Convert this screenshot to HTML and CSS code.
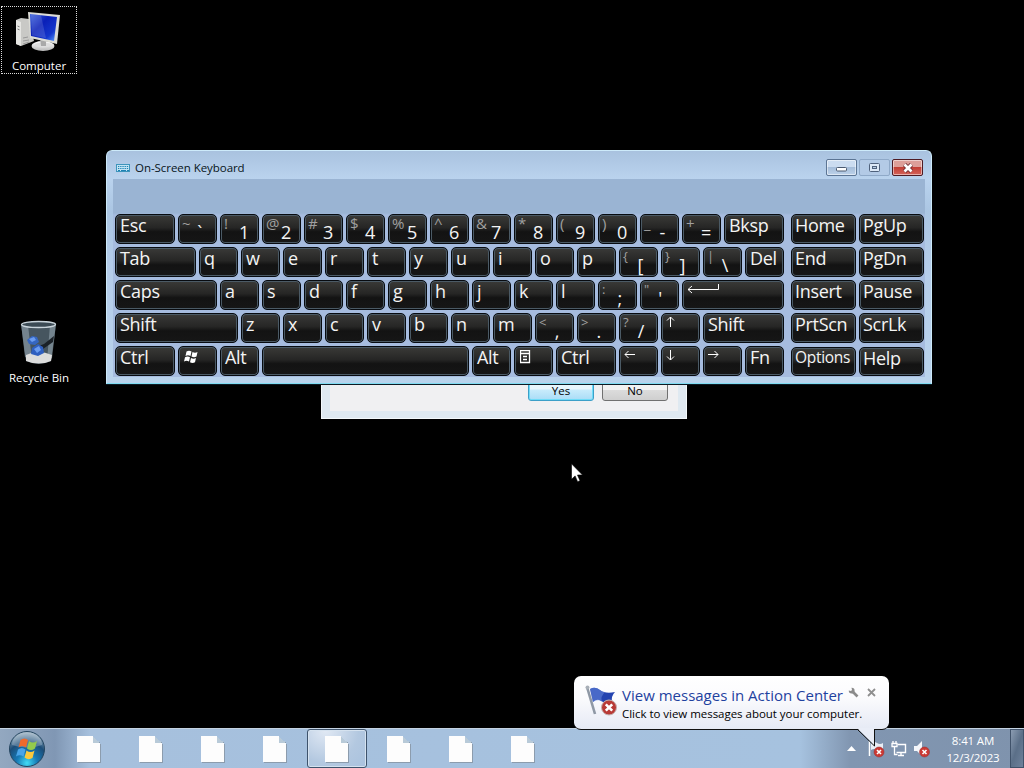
FILE: index.html
```html
<!DOCTYPE html>
<html lang="en">
<head>
    <meta charset="UTF-8">
    <meta name="viewport" content="width=device-width, initial-scale=1.0">
    <title>Desktop</title>
    <link rel="stylesheet" href="styles.css">
</head>
<body>
    <div class="desktop">
        <div class="icon computer">
            <svg width="48" height="46" viewBox="0 0 48 46">
                <defs>
                    <linearGradient id="screen" x1="0" y1="0" x2="1" y2="1">
                        <stop offset="0" stop-color="#3c62dc"/>
                        <stop offset=".4" stop-color="#0a20b8"/>
                        <stop offset=".75" stop-color="#1436cc"/>
                        <stop offset="1" stop-color="#5ea4ff"/>
                    </linearGradient>
                    <linearGradient id="metal" x1="0" y1="0" x2="0" y2="1">
                        <stop offset="0" stop-color="#fff"/>
                        <stop offset="1" stop-color="#b9b9b9"/>
                    </linearGradient>
                </defs>
                <path d="M1 9l5-2 8 1 5 22-13 5-5-2z" fill="#c9c9c6"/>
                <path d="M1 9l5 2v24l-5-2z" fill="#e6e6e3"/>
                <path d="M2.500 15l2 .8M2.500 18l2 .8" stroke="#777"/>
                <path d="M8 27l5-1M8 30l6-1M8 33l6-2" stroke="#999"/>
                <ellipse cx="28" cy="35" rx="11.500" ry="5" fill="url(#metal)"/>
                <ellipse cx="28" cy="34" rx="8" ry="2.500" fill="#dedede"/>
                <path d="M25 27l6 2v6h-5z" fill="#a9a9a9"/>
                <path d="M13 1l32 3-3 29-27-6z" fill="#dcdcd6"/>
                <path d="M15 3l27 3-3 24-23-5z" fill="url(#screen)"/>
                <path d="M16 3.200l10 1 5 23-14-3z" fill="#fff" opacity=".14"/>
            </svg>
            <span>Computer</span>
        </div>

        <div class="icon recycle">
            <svg width="40" height="46" viewBox="0 0 40 46">
                <path d="M2 4l5 37q13 6 25 0l5-37z" fill="#46555f"/>
                <path d="M2 4l4 33 7 3L9 5z" fill="#8797a3" opacity=".7"/>
                <path d="M37 4l-4 34-5 3 3-36z" fill="#93a3ad" opacity=".6"/>
                <path d="M7 35q12-6 26 0l-1 6q-12 5-25 0z" fill="#dcdcdc"/>
                <path d="M17 27l8-3 10-8-1 6-10 7-6 1z" fill="#1b2127"/>
                <path d="M8 20l5-4 5 1 2 5-4 3-6-1z" fill="#3566c0"/>
                <path d="M13 28l6-4 5 3 1 6-6 3-7-2z" fill="#2f5fc0"/>
                <path d="M10 19l5-2 2 3-4 2zM15 29l5-3 2 4-4 3z" fill="#6b9cf0"/>
                <ellipse cx="19.500" cy="4.500" rx="17" ry="3" fill="#3b4a54" stroke="#c8d3da" stroke-width="1.300"/>
            </svg>
            <span>Recycle Bin</span>
        </div>

        <div class="dialog">
            <div class="dialog-body">
                <button class="btn default">Yes</button>
                <button class="btn">No</button>
            </div>
        </div>

        <div class="window">
            <div class="titlebar">
                <svg class="kb-icon" width="15" height="9" viewBox="0 0 15 9">
                    <rect x=".5" y=".5" width="13" height="7" fill="#c3e4f4" stroke="#3d94bb"/>
                    <path d="M2 2.500h11M2 4.500h11" stroke="#1c82b4" stroke-dasharray="1.300 .9"/>
                    <path d="M2 6.500h2M5 6.500h5M11 6.500h2" stroke="#1c82b4"/>
                </svg>
                <span class="title">On-Screen Keyboard</span>
                <div class="controls">
                    <div class="ctl">
                        <svg class="dash" width="12" height="6" viewBox="0 0 12 6"><rect x=".5" y="1.500" width="10" height="3.500" rx="1" fill="#fff" stroke="#4b5a70"/></svg>
                    </div>
                    <div class="ctl max">
                        <svg width="11" height="9" viewBox="0 0 11 9"><rect x=".5" y=".5" width="10" height="8" rx="1" fill="#dce8f6" stroke="#4f617c"/><rect x="3.500" y="3.500" width="4" height="2" fill="#b9cde4" stroke="#4f617c"/></svg>
                    </div>
                    <div class="ctl close">
                        <svg width="12" height="10" viewBox="0 0 12 10"><path d="M2.500 1.500l7 7M9.500 1.500l-7 7" stroke="#6b2a2e" stroke-width="4.400"/><path d="M2.500 1.500l7 7M9.500 1.500l-7 7" stroke="#fff" stroke-width="2.800"/></svg>
                    </div>
                </div>
            </div>

            <div class="keyboard">
                <div class="main-keys">
                    <div class="row">
                        <div class="key u3">Esc</div>
                        <div class="key dual tick"><i>~</i><b>`</b></div>
                        <div class="key dual"><i>!</i><b>1</b></div>
                        <div class="key dual"><i>@</i><b>2</b></div>
                        <div class="key dual"><i>#</i><b>3</b></div>
                        <div class="key dual"><i>$</i><b>4</b></div>
                        <div class="key dual"><i>%</i><b>5</b></div>
                        <div class="key dual"><i>^</i><b>6</b></div>
                        <div class="key dual"><i>&amp;</i><b>7</b></div>
                        <div class="key dual"><i>*</i><b>8</b></div>
                        <div class="key dual"><i>(</i><b>9</b></div>
                        <div class="key dual"><i>)</i><b>0</b></div>
                        <div class="key dual minus"><i>_</i><b>-</b></div>
                        <div class="key dual"><i>+</i><b>=</b></div>
                        <div class="key u3">Bksp</div>
                    </div>
                    <div class="row">
                        <div class="key u4">Tab</div>
                        <div class="key">q</div>
                        <div class="key">w</div>
                        <div class="key">e</div>
                        <div class="key">r</div>
                        <div class="key">t</div>
                        <div class="key">y</div>
                        <div class="key">u</div>
                        <div class="key">i</div>
                        <div class="key">o</div>
                        <div class="key">p</div>
                        <div class="key dual low"><i>{</i><b>[</b></div>
                        <div class="key dual low"><i>}</i><b>]</b></div>
                        <div class="key dual low slash"><i>|</i><b>\</b></div>
                        <div class="key">Del</div>
                    </div>
                    <div class="row">
                        <div class="key u5">Caps</div>
                        <div class="key">a</div>
                        <div class="key">s</div>
                        <div class="key">d</div>
                        <div class="key">f</div>
                        <div class="key">g</div>
                        <div class="key">h</div>
                        <div class="key">j</div>
                        <div class="key">k</div>
                        <div class="key">l</div>
                        <div class="key dual low"><i>:</i><b>;</b></div>
                        <div class="key dual low quote"><i>"</i><b>'</b></div>
                        <div class="key u5">
                            <svg width="34" height="12" viewBox="0 0 34 12"><path d="M31.500 1v5.500H1M5 3L1 6.500 5 10" fill="none" stroke="#fff"/></svg>
                        </div>
                    </div>
                    <div class="row">
                        <div class="key u6">Shift</div>
                        <div class="key">z</div>
                        <div class="key">x</div>
                        <div class="key">c</div>
                        <div class="key">v</div>
                        <div class="key">b</div>
                        <div class="key">n</div>
                        <div class="key">m</div>
                        <div class="key dual low"><i>&lt;</i><b>,</b></div>
                        <div class="key dual low"><i>&gt;</i><b>.</b></div>
                        <div class="key dual low slash"><i>?</i><b>/</b></div>
                        <div class="key">
                            <svg width="12" height="12" viewBox="0 0 12 12"><path d="M4.500 11V1M1 4.500L4.500 1 8 4.500" fill="none" stroke="#fff"/></svg>
                        </div>
                        <div class="key u4">Shift</div>
                    </div>
                    <div class="row">
                        <div class="key u3">Ctrl</div>
                        <div class="key">
                            <svg class="win" width="16" height="14" viewBox="0 0 16 14">
                                <path d="M3.500 1.500q2.500-1.500 5 0l-1 4.500q-2.500-1.500-5 0zM9.500 2q2.500 1.300 5 0l-1 4.500q-2.500 1.300-5 0zM2 7.200q2.500-1.500 5 0l-1 4.300q-2.500-1.500-5 0zM8 8q2.500 1.300 5 0l-1 4.300q-2.500 1.300-5 0z" fill="#fff"/>
                            </svg>
                        </div>
                        <div class="key">Alt</div>
                        <div class="key u10"></div>
                        <div class="key">Alt</div>
                        <div class="key">
                            <svg class="menu" width="11" height="14" viewBox="0 0 11 14"><path d="M.5.5h9v12h-9zM0 3.500h10M3 6.500h4M3 9.500h4" fill="none" stroke="#fff" stroke-width="1.300"/></svg>
                        </div>
                        <div class="key u3">Ctrl</div>
                        <div class="key">
                            <svg width="12" height="12" viewBox="0 0 12 12"><path d="M11 5.500H1M4.500 2L1 5.500 4.500 9" fill="none" stroke="#fff"/></svg>
                        </div>
                        <div class="key">
                            <svg width="12" height="12" viewBox="0 0 12 12"><path d="M4.500 1v10M1 7.500L4.500 11 8 7.500" fill="none" stroke="#fff"/></svg>
                        </div>
                        <div class="key">
                            <svg width="12" height="12" viewBox="0 0 12 12"><path d="M0 5.500h10M6.500 2L10 5.500 6.500 9" fill="none" stroke="#fff"/></svg>
                        </div>
                        <div class="key">Fn</div>
                    </div>
                </div>

                <div class="side-keys">
                    <div class="key">Home</div>
                    <div class="key">PgUp</div>
                    <div class="key">End</div>
                    <div class="key">PgDn</div>
                    <div class="key">Insert</div>
                    <div class="key">Pause</div>
                    <div class="key">PrtScn</div>
                    <div class="key">ScrLk</div>
                    <div class="key short small">Options</div>
                    <div class="key short">Help</div>
                </div>
            </div>
        </div>

        <svg class="cursor" width="12" height="20" viewBox="0 0 12 20">
            <path d="M.5.800v15.500l3.600-3.400 2.500 5.800 2.400-1-2.500-5.700h5z" fill="#fff" stroke="#000" stroke-width=".6"/>
        </svg>

        <div class="taskbar">
            <div class="start">
                <svg width="38" height="38" viewBox="0 0 38 38">
                    <defs>
                        <radialGradient id="orb" cx=".5" cy=".9" r=".85">
                            <stop offset="0" stop-color="#42dcf5"/>
                            <stop offset=".35" stop-color="#1779b5"/>
                            <stop offset=".7" stop-color="#1c4d78"/>
                            <stop offset="1" stop-color="#8ca6ba"/>
                        </radialGradient>
                    </defs>
                    <circle cx="19" cy="19" r="17.500" fill="url(#orb)" stroke="#24455f"/>
                    <path d="M4 15a15 13 0 0 1 30 0q-14 5-30 0z" fill="#fff" opacity=".25"/>
                    <path d="M12.500 10q4-3 7.500 0l-2 7.500q-4-3-7.500 0z" fill="#ee6a2c"/>
                    <path d="M21 11q4 3 8 0l-2 7.500q-4 3-8 0z" fill="#93ca4c"/>
                    <path d="M10 19.500q4-3 7.500 0l-2 7q-4-2.500-7.500 0z" fill="#49a4e8"/>
                    <path d="M18.500 20.500q4 3 8 0l-2 7.500q-4 2.500-8-.5z" fill="#fbc93d"/>
                </svg>
            </div>
            <div class="tasks">
                <div class="task"><div class="file"></div></div>
                <div class="task"><div class="file"></div></div>
                <div class="task"><div class="file"></div></div>
                <div class="task"><div class="file"></div></div>
                <div class="task active"><div class="file"></div></div>
                <div class="task"><div class="file"></div></div>
                <div class="task"><div class="file"></div></div>
                <div class="task"><div class="file"></div></div>
            </div>
            <div class="tray">
                <svg class="arrow" width="9" height="5" viewBox="0 0 9 5"><path d="M4.500 0L9 5H0z" fill="#fff"/></svg>
                <svg width="18" height="18" viewBox="0 0 18 18">
                    <path d="M2.500 1v15" stroke="#fff" stroke-width="1.500"/>
                    <path d="M4 3q3-2 6 0t6 0v7q-3 2-6 0t-6 0z" fill="#e8edf5"/>
                    <circle cx="12" cy="12" r="5" fill="#cb3a34" stroke="#9b2c2c" stroke-width=".5"/>
                    <path d="M10 10l4 4M14 10l-4 4" stroke="#fff" stroke-width="1.600"/>
                </svg>
                <svg width="16" height="16" viewBox="0 0 16 16">
                    <path d="M6.500 3.500h8v8h-9M7 14.500h6M10 12v2" fill="none" stroke="#fff" stroke-width="1.400"/>
                    <path d="M1 2.500h5v3H1zM2 0v2M5 0v2M3.500 5.500v8h3" fill="none" stroke="#fff" stroke-width="1.300"/>
                </svg>
                <svg width="18" height="18" viewBox="0 0 18 18">
                    <path d="M1 6h3l5-5v15l-5-5H1z" fill="#f4f6fa"/>
                    <circle cx="11.500" cy="12" r="5" fill="#cb3a34" stroke="#9b2c2c" stroke-width=".5"/>
                    <path d="M9.500 10l4 4M13.500 10l-4 4" stroke="#fff" stroke-width="1.600"/>
                </svg>
                <div class="clock">
                    <span>8:41 AM</span>
                    <span>12/3/2023</span>
                </div>
                <div class="show-desktop"></div>
            </div>
        </div>

        <div class="balloon">
            <svg class="flag" width="34" height="32" viewBox="0 0 34 32">
                <path d="M2 2l8 27" stroke="#8f98a5" stroke-width="2.600"/>
                <circle cx="2.500" cy="2.500" r="2" fill="#a9b0b8"/>
                <path d="M5 4q5-3 10 1t15 2q-4 4-3 10-7 2-11-1t-8 1z" fill="#2343b0"/>
                <path d="M5 4q5-3 10 1 2 2 5 2-5 5-3 9-5-2-9 1z" fill="#6e8fe0" opacity=".5"/>
                <circle cx="24" cy="22.500" r="7.500" fill="#b83a36" stroke="#c5b3b3"/>
                <path d="M20.800 19.300l6.400 6.400M27.200 19.300l-6.400 6.400" stroke="#fff" stroke-width="2.600"/>
            </svg>
            <div class="balloon-text">
                <div class="balloon-title">View messages in Action Center</div>
                <div class="balloon-msg">Click to view messages about your computer.</div>
            </div>
            <svg class="wrench" width="11" height="11" viewBox="0 0 11 11"><path d="M4 4l5.500 5.500" stroke="#8b8b8b" stroke-width="2.600"/><path d="M3.500.8A2.900 2.900 0 1 1 .8 3.500L3 4l1-1z" fill="#8b8b8b"/></svg>
            <svg class="dismiss" width="9" height="9" viewBox="0 0 9 9"><path d="M1 1l7 7M8 1L1 8" stroke="#8f8f8f" stroke-width="1.800"/></svg>
            <svg class="tail" width="20" height="20" viewBox="0 0 20 20"><path d="M0 0l18 18V0z" fill="#e9edf7"/><path d="M0 1l17.500 17V1" fill="none" stroke="#111"/></svg>
        </div>
    </div>
</body>
</html>
```
FILE: styles.css
```css
* {
    box-sizing: border-box;
}

body {
    margin: 0;
    background: #000;
    font-family: "Open Sans", "Noto Sans", sans-serif;
    font-size: 12px;
}

svg {
    display: block;
    flex: none;
}

.desktop {
    position: relative;
    width: 1024px;
    height: 768px;
    overflow: hidden;
    background: #000;
}

/* desktop icons */
.icon {
    position: absolute;
    left: 1px;
    width: 76px;
    height: 68px;
    display: flex;
    flex-direction: column;
    align-items: center;
    color: #fff;
    font-size: 11.5px;
    line-height: 16px;
    white-space: nowrap;
}

.computer {
    top: 6px;
    padding-top: 4px;
    border: 1px dotted #ddd;
}

.recycle {
    top: 318px;
    padding-top: 2px;
}

.icon span {
    margin-top: 1px;
}

.recycle span {
    margin-top: 4px;
}

/* dialog behind the keyboard */
.dialog {
    position: absolute;
    left: 321px;
    top: 330px;
    width: 366px;
    height: 89px;
    padding: 0 8px 8px;
    background: #dfe9f1;
    border: 1px solid #f4f9fc;
}

.dialog-body {
    height: 80px;
    display: flex;
    justify-content: flex-end;
    align-items: flex-end;
    gap: 8px;
    padding: 0 10px 10px 0;
    background: #f0f0f2;
}

.btn {
    width: 66px;
    height: 22px;
    padding: 2px 0 0;
    border: 1px solid #707070;
    border-radius: 3px;
    background: linear-gradient(#f2f2f2 50%, #dcdcdc 50%, #cfcfcf);
    font-family: inherit;
    font-size: 11.5px;
    line-height: 18px;
    color: #000;
}

.btn.default {
    border-color: #3c9fc8;
    background: linear-gradient(#e8f6fd 45%, #c8ebfc 50%, #a9dcf7);
    box-shadow: inset 0 0 0 1px #6fdcf8;
}

/* on-screen keyboard */
.window {
    position: absolute;
    left: 106px;
    top: 150px;
    width: 826px;
    height: 234px;
    padding: 0 6px 7px 6px;
    border: 1px solid #cdeafa;
    border-bottom-color: #7fdcf2;
    border-radius: 6px 6px 0 0;
    background: linear-gradient(#a9c2df, #bad3ee 28px, #abc6e3 60px, #b5cdea 120px, #b9d3ec);
    box-shadow: 0 1px 0 #0c1a24;
}

.titlebar {
    height: 28px;
    display: flex;
    align-items: flex-start;
    padding-left: 3px;
}

.kb-icon {
    margin-top: 13px;
}

.title {
    margin: 8px 0 0 4px;
    font-size: 11.5px;
    line-height: 18px;
    letter-spacing: -0.05px;
    color: #081420;
}

.controls {
    display: flex;
    gap: 2px;
    margin: 8px 2px 0 auto;
}

.ctl {
    width: 31px;
    height: 17px;
    display: flex;
    align-items: center;
    justify-content: center;
    border: 1px solid #5c7594;
    border-radius: 2px;
    background: linear-gradient(#cbdcf0 45%, #a5bdd9 50%, #bdd2ea);
    box-shadow: inset 0 0 0 1px rgba(255, 255, 255, 0.5);
}

.ctl .dash {
    margin-top: 3px;
}

.ctl.max {
    border-color: #8fa9c8;
    background: #b3cae6;
    box-shadow: none;
}

.ctl.close {
    border-color: #4e1b23;
    background: linear-gradient(#dd9f99 45%, #c23f35 50%, #d4635a);
}

.keyboard {
    height: 198px;
    display: flex;
    gap: 7px;
    padding: 35px 0 0 2px;
    background: linear-gradient(#9ab4d3 34px, #a6bcdf 36px, #a6bcdf);
}

.main-keys {
    display: flex;
    flex-direction: column;
    gap: 3px;
}

.row {
    display: flex;
    gap: 3px;
}

.side-keys {
    display: grid;
    grid-template-columns: 65px 65px;
    grid-auto-rows: 30px;
    gap: 3px;
}

.key {
    width: 39px;
    height: 30px;
    padding: 0 0 0 4px;
    border: 1px solid #070b10;
    border-radius: 5px;
    background: linear-gradient(#3a3a38, #262625 45%, #131313 60%, #161616);
    box-shadow: inset 0 0 0 1px #4b5a65;
    color: #f4f4f4;
    font-size: 18px;
    line-height: 20px;
    letter-spacing: -0.3px;
    white-space: nowrap;
}

.u3 { width: 60px; }
.u4 { width: 81px; }
.u5 { width: 102px; }
.u6 { width: 123px; }
.u10 { width: 207px; }

.side-keys .key {
    width: 65px;
    padding-left: 3px;
}

.side-keys .short {
    height: 29px;
    margin-top: 1px;
}

.side-keys .small {
    font-size: 15.5px;
    line-height: 18px;
}

.key.dual {
    display: flex;
    padding: 0 9px 0 3px;
}

.dual i {
    font-style: normal;
    font-size: 15px;
    line-height: 17px;
    color: #a0a0a0;
}

.dual b {
    margin: 7px 0 0 auto;
    font-weight: normal;
}

.dual.tick,
.dual.low {
    padding-right: 14px;
}

.dual.minus,
.dual.slash {
    padding-right: 13px;
}

.dual.quote {
    padding-right: 16px;
}

.dual.low i {
    font-size: 13px;
    line-height: 17px;
}

.key svg {
    margin-top: 2px;
}

.key .win {
    margin-top: 3px;
}

.key .menu {
    margin: 3px 0 0 1px;
}

.cursor {
    position: absolute;
    left: 571px;
    top: 463px;
}

/* taskbar */
.taskbar {
    position: absolute;
    left: 0;
    bottom: 0;
    width: 1024px;
    height: 40px;
    display: flex;
    border-top: 1px solid #c4d3e2;
    background: linear-gradient(90deg, #93a8c0, #8097b4 55px, #a6c0dd 90px, #a6c2df 800px, #8196b1 850px, #7f93ad);
}

.start {
    width: 59px;
    padding: 1px 0 0 8px;
}

.tasks {
    display: flex;
    gap: 2px;
}

.task {
    width: 60px;
    height: 39px;
    padding: 6px 0 0 17px;
    border: 1px solid transparent;
    border-radius: 3px;
}

.task.active {
    border-color: #3e536c;
    background: radial-gradient(circle at 30% 0, #e1e9f4, #b3c8e0 60%, #a9c2de);
    box-shadow: inset 0 0 0 1px #d5e2ef;
}

.file {
    position: relative;
    width: 23px;
    height: 26px;
    background: linear-gradient(225deg, transparent 5px, #fdfdfd 5px);
    filter: drop-shadow(1px 1px 0 #8c9cad);
}

.file::after {
    content: "";
    position: absolute;
    right: 0;
    top: 0;
    width: 7px;
    height: 7px;
    background: linear-gradient(45deg, #b8cad8 50%, transparent 50%);
}

.tray {
    flex: 1;
    display: flex;
    align-items: center;
    justify-content: flex-end;
    gap: 6px;
}

.tray .arrow {
    margin-right: 5px;
}

.clock {
    width: 68px;
    margin-left: 2px;
    display: flex;
    flex-direction: column;
    align-items: center;
    color: #fff;
    font-size: 11.5px;
    line-height: 17px;
    letter-spacing: -0.15px;
}

.show-desktop {
    width: 14px;
    height: 39px;
    margin-left: -3px;
    border: 1px solid #40526a;
    background: linear-gradient(110deg, #8b9cb2, #5b6f88 50%, #6e819b);
}

/* action center balloon */
.balloon {
    position: absolute;
    left: 574px;
    top: 676px;
    width: 315px;
    height: 54px;
    display: flex;
    padding-left: 11px;
    border-bottom: 1px solid #111;
    border-radius: 7px;
    background: linear-gradient(#fff, #fbfbfd 40%, #e6eaf5);
}

.flag {
    margin-top: 9px;
}

.balloon-text {
    width: 222px;
    padding-top: 10px;
    margin-left: 3px;
    white-space: nowrap;
}

.balloon-title {
    font-size: 15px;
    line-height: 19px;
    color: #1f429f;
}

.balloon-msg {
    font-size: 11.5px;
    line-height: 18px;
    letter-spacing: -0.03px;
    color: #000;
}

.wrench {
    margin: 11px 0 0 4px;
}

.dismiss {
    margin: 12px 0 0 8px;
}

.tail {
    position: absolute;
    left: 283px;
    top: 52px;
}
```
